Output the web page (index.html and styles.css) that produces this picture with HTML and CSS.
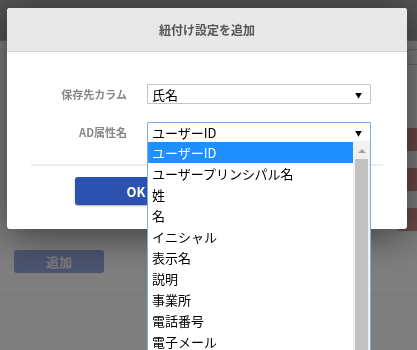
FILE: index.html
```html
<!DOCTYPE html>
<html lang="ja">
<head>
<meta charset="utf-8">
<link rel="stylesheet" href="styles.css">
</head>
<body>
<div class="page">
  <div class="topbar"></div>
  <div class="content">
    <div class="toolrow"><span class="boxcorner"></span></div>
    <div class="rows">
      <div class="row"><span class="del"></span></div>
      <div class="row"><span class="del"></span></div>
      <div class="row"><span class="del"></span></div>
    </div>
    <div class="addrow"><button class="addbtn">追加</button></div>
    <div class="sep"></div>
  </div>
</div>
<div class="overlay"></div>
<div class="modal">
  <div class="modal-head">紐付け設定を追加</div>
  <div class="modal-body">
    <div class="form">
      <div class="label">保存先カラム</div>
      <div class="select"><span>氏名</span><span class="arrow">▼</span></div>
      <div class="label">AD属性名</div>
      <div class="select focus"><span>ユーザーID</span><span class="arrow">▼</span></div>
    </div>
    <div class="divider"></div>
    <div class="footer">
      <button class="btn ok">OK</button>
      <button class="btn cancel">キャンセル</button>
    </div>
  </div>
</div>
<div class="dropdown">
  <ul class="options">
    <li class="sel">ユーザーID</li>
    <li>ユーザープリンシパル名</li>
    <li>姓</li>
    <li>名</li>
    <li>イニシャル</li>
    <li>表示名</li>
    <li>説明</li>
    <li>事業所</li>
    <li>電話番号</li>
    <li>電子メール</li>
  </ul>
  <div class="scrollbar">
    <div class="up"></div>
    <div class="thumb"></div>
  </div>
</div>
</body>
</html>
```
FILE: styles.css
```css
html, body {
  margin: 0;
  padding: 0;
  width: 417px;
  height: 350px;
  overflow: hidden;
  font-family: "Noto Sans CJK JP", "Noto Sans", sans-serif;
}
.page {
  background: #ffffff;
  height: 350px;
}
.topbar {
  height: 40px;
  background: #a8a8a8;
  border-bottom: 1px solid #b8b8b8;
}
.content {
  display: flex;
  flex-direction: column;
}
.toolrow {
  height: 87px;
  display: flex;
  justify-content: flex-end;
  padding-top: 8px;
  box-sizing: border-box;
}
.boxcorner {
  width: 30px;
  height: 14px;
  margin-right: -20px;
  border: 1px solid #ccc;
  border-radius: 6px;
}
.rows {
  display: flex;
  flex-direction: column;
  gap: 17px;
}
.row {
  height: 23px;
  display: flex;
  justify-content: flex-end;
}
.del {
  width: 20px;
  height: 23px;
  background: #d89494;
  border-radius: 3px 0 0 3px;
}
.addrow {
  padding: 17px 0 0 14px;
}
.addbtn {
  width: 90px;
  height: 23px;
  border: 0;
  border-radius: 3px;
  background: #98abe3;
  color: #fafafa;
  font-family: inherit;
  font-size: 13px;
  font-weight: bold;
  padding: 0;
}
.sep {
  margin-top: 21px;
  height: 1px;
  background: #eeeeee;
}
.overlay {
  position: fixed;
  inset: 0;
  background: rgba(0, 0, 0, 0.5);
}
.modal {
  position: absolute;
  left: 7px;
  top: 8px;
  width: 400px;
  background: #fff;
  border-radius: 3px;
  box-shadow: 0 6px 40px rgba(0, 0, 0, 0.55);
  overflow: hidden;
}
.modal-head {
  height: 43px;
  line-height: 43px;
  background: #e8e8e8;
  border-bottom: 1px solid #d6d6d6;
  text-align: center;
  color: #555;
  font-size: 12px;
  font-weight: bold;
}
.modal-body {
  padding: 32px 24px 24px;
}
.form {
  display: grid;
  grid-template-columns: 96px 224px;
  column-gap: 20px;
  row-gap: 18px;
  align-items: center;
}
.label {
  text-align: right;
  color: #888;
  font-size: 11px;
  font-weight: bold;
}
.select {
  height: 20px;
  box-sizing: border-box;
  border: 1px solid #c4c4c4;
  border-radius: 1px;
  display: flex;
  align-items: center;
  justify-content: space-between;
  padding: 1px 8px 0 4px;
  font-size: 13px;
  color: #000;
  line-height: 18px;
}
.select.focus {
  border-color: #86a8e4;
}
.arrow {
  font-size: 7px;
  line-height: 18px;
}
.divider {
  margin-top: 22px;
  height: 2px;
  background: #eeeeee;
}
.footer {
  padding-top: 11px;
  display: flex;
  justify-content: center;
  gap: 20px;
}
.btn {
  width: 122px;
  height: 28px;
  border: 0;
  border-radius: 3px;
  font-family: inherit;
  font-size: 13px;
  font-weight: bold;
  padding: 0;
}
.btn.ok {
  background: #2a52ae;
  color: #fff;
  box-shadow: 0 1px 2px rgba(0, 0, 0, 0.3);
}
.btn.cancel {
  background: #eee;
  color: #555;
}
.dropdown {
  position: absolute;
  left: 147px;
  top: 141px;
  width: 224px;
  height: 209px;
  overflow: hidden;
  box-sizing: border-box;
  border: 1px solid #86a8e4;
  border-top: 0;
  border-bottom: 0;
  background: #fff;
  display: flex;
}
.options {
  list-style: none;
  margin: 0;
  padding: 1px 0 0;
  flex: 1;
}
.options li {
  height: 21px;
  line-height: 21px;
  padding-left: 4px;
  font-size: 13px;
  color: #000;
  white-space: nowrap;
}
.options li.sel {
  background: #1e90ff;
  color: #fff;
}
.scrollbar {
  width: 17px;
  background: #f1f1f1;
  display: flex;
  flex-direction: column;
  align-items: center;
}
.up {
  margin-top: 8px;
  width: 0;
  height: 0;
  border-left: 4px solid transparent;
  border-right: 4px solid transparent;
  border-bottom: 4px solid #a3a3a3;
}
.thumb {
  margin-top: 6px;
  width: 13px;
  flex: 1;
  background: #c1c1c1;
}
```
